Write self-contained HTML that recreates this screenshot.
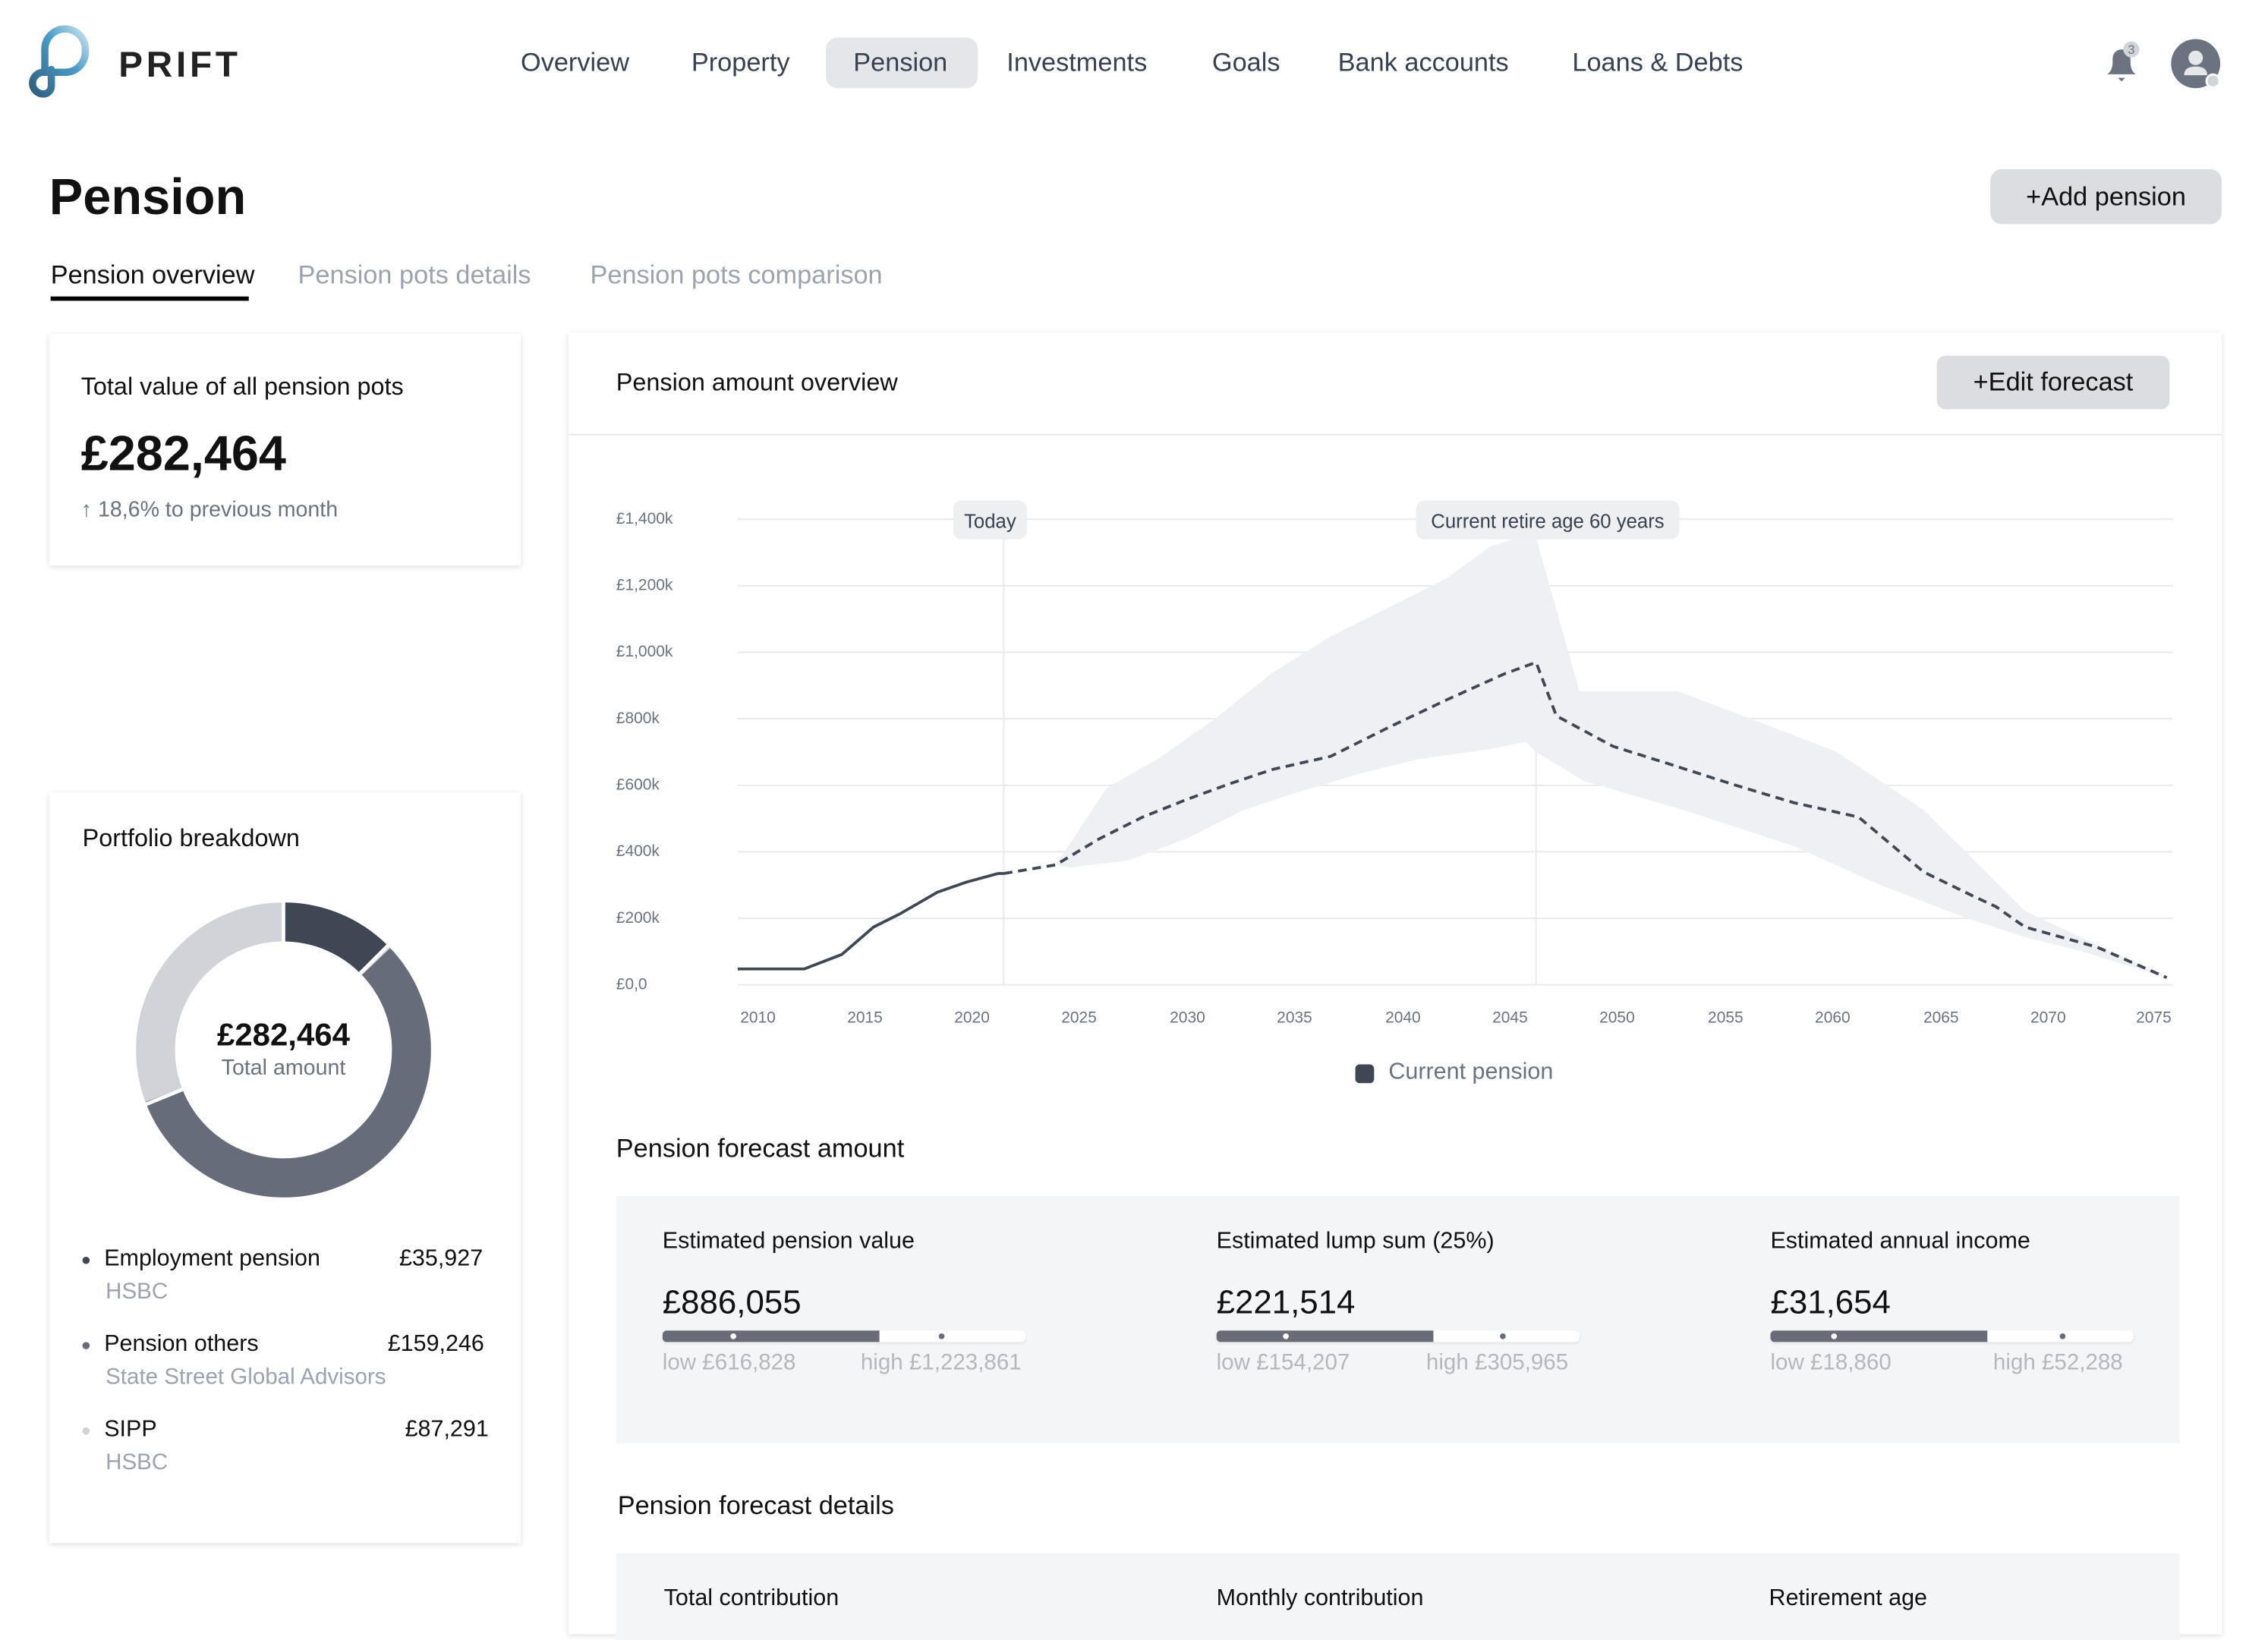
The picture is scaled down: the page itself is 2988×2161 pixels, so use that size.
<!DOCTYPE html>
<html><head><meta charset="utf-8"><style>
*{box-sizing:border-box;margin:0;padding:0}
html,body{width:2988px;height:2124px;overflow:hidden;background:#fff}
#w{position:absolute;left:0;top:0;width:1568px;height:1115px;transform:scale(1.9056);transform-origin:0 0;font-family:"Liberation Sans",sans-serif;color:#111}
.a{position:absolute;white-space:nowrap}
.nav{font-size:18px;color:#374151;top:33px}
.card{position:absolute;background:#fff;box-shadow:0 1px 4px rgba(0,0,0,.14)}
.yl{position:absolute;left:426px;font-size:11px;color:#6b7280}
.xl{position:absolute;top:698px;font-size:11px;color:#6b7280;width:40px;text-align:center}
.h{font-size:16px;color:#111}
.big{font-size:23px;color:#111}
.bar{position:absolute;height:8px;width:251px;background:#fff;border-radius:3px;box-shadow:0 1px 2px rgba(0,0,0,.08);overflow:hidden}
.bar i{position:absolute;left:0;top:0;height:8px;width:150px;background:#676c78}
.bar b{position:absolute;top:2px;width:4px;height:4px;border-radius:2px}
.lh{font-size:15.5px;color:#b4b7bc}
</style></head><body><div id="w">
<svg class="a" style="left:16px;top:14px" width="60" height="60" viewBox="0 0 60 60"><defs><linearGradient id="g" x1="0" y1="1" x2="1" y2="0"><stop offset="0" stop-color="#2f5f80"/><stop offset=".6" stop-color="#4a9cc8"/><stop offset="1" stop-color="#c8e2ef"/></linearGradient></defs><path d="M15 36 V20 A14 14 0 0 1 43 20 V22 A14 14 0 0 1 29 36 H14 A7.5 7.5 0 0 0 14 51 A5.5 5.5 0 0 0 19.5 45.5 V34" fill="none" stroke="url(#g)" stroke-width="5" stroke-linecap="round"/></svg>
<div class="a" style="left:82px;top:31px;font-size:25px;letter-spacing:2.5px;font-weight:bold;color:#222">PRIFT</div>
<div class="a nav" style="left:360px">Overview</div>
<div class="a nav" style="left:478px">Property</div>
<div class="a" style="left:571px;top:26px;width:105px;height:35px;background:#e5e6e9;border-radius:8px"></div>
<div class="a nav" style="left:590px">Pension</div>
<div class="a nav" style="left:696px">Investments</div>
<div class="a nav" style="left:838px">Goals</div>
<div class="a nav" style="left:925px">Bank accounts</div>
<div class="a nav" style="left:1087px">Loans &amp; Debts</div>
<svg class="a" style="left:1452px;top:28px" width="32" height="32" viewBox="0 0 26 26"><path d="M4 19 Q7 17 7 12 V10 A5 5 0 0 1 17 10 V12 Q17 17 20 19 Z" fill="#6b7280"/><path d="M10 21 H14 L12 23Z" fill="#6b7280"/><circle cx="17.5" cy="5" r="4.5" fill="#d1d5db"/><text x="17.5" y="7.5" font-size="7" text-anchor="middle" fill="#6b7280" font-family="Liberation Sans">3</text></svg>
<svg class="a" style="left:1500px;top:26px" width="40" height="40" viewBox="0 0 40 40"><circle cx="18" cy="18" r="17" fill="#6b7280"/><circle cx="18" cy="14" r="5" fill="#e5e7eb"/><path d="M10 26 Q10 20 18 20 Q26 20 26 26Z" fill="#e5e7eb"/><circle cx="30" cy="30" r="4.5" fill="#d1d3d8" stroke="#fff" stroke-width="1.5"/></svg>
<div class="a" style="left:34px;top:117px;font-size:35px;font-weight:bold;color:#111">Pension</div>
<div class="a" style="left:1376px;top:117px;width:160px;height:38px;background:#dcdde0;border-radius:8px;font-size:18px;text-align:center;line-height:38px">+Add pension</div>
<div class="a" style="left:35px;top:180px;font-size:18px">Pension overview</div>
<div class="a" style="left:35px;top:205px;width:137px;height:3px;background:#000"></div>
<div class="a" style="left:206px;top:180px;font-size:18px;color:#9ca3af">Pension pots details</div>
<div class="a" style="left:408px;top:180px;font-size:18px;color:#9ca3af">Pension pots comparison</div>

<div class="card" style="left:34px;top:231px;width:326px;height:160px"></div>
<div class="a h" style="left:56px;top:258px;font-size:17px">Total value of all pension pots</div>
<div class="a" style="left:56px;top:295px;font-size:34px;font-weight:bold">£282,464</div>
<div class="a" style="left:56px;top:344px;font-size:15px;color:#6b7280">↑ 18,6% to previous month</div>

<div class="card" style="left:34px;top:548px;width:326px;height:519px"></div>
<div class="a h" style="left:57px;top:570px;font-size:17px">Portfolio breakdown</div>
<svg class="a" style="left:94px;top:624px" width="204" height="204" viewBox="-102 -102 204 204">
<g fill="none" stroke-width="27" transform="rotate(-90)">
<circle r="88.5" stroke="#d1d3d8"/>
<circle r="88.5" stroke="#676c7a" stroke-dasharray="313.5 243" stroke-dashoffset="-71.5"/>
<circle r="88.5" stroke="#3f4654" stroke-dasharray="70 486"/>
</g>
<g stroke="#fff" stroke-width="2.5"><line x1="0" y1="-75" x2="0" y2="-103"/><line x1="53" y1="-53" x2="73" y2="-73"/><line x1="-69" y1="27" x2="-96" y2="38"/></g>
</svg>
<div class="a" style="left:96px;top:703px;width:200px;text-align:center;font-size:22px;font-weight:bold">£282,464</div>
<div class="a" style="left:96px;top:730px;width:200px;text-align:center;font-size:15px;color:#6b7280">Total amount</div>
<div class="a" style="left:57px;top:869px;width:5px;height:5px;border-radius:3px;background:#3f4654"></div>
<div class="a h" style="left:72px;top:862px">Employment pension</div><div class="a h" style="left:276px;top:862px">£35,927</div>
<div class="a" style="left:73px;top:885px;font-size:15.5px;color:#9ca3af">HSBC</div>
<div class="a" style="left:57px;top:928px;width:5px;height:5px;border-radius:3px;background:#676c7a"></div>
<div class="a h" style="left:72px;top:921px">Pension others</div><div class="a h" style="left:268px;top:921px">£159,246</div>
<div class="a" style="left:73px;top:944px;font-size:15.5px;color:#9ca3af">State Street Global Advisors</div>
<div class="a" style="left:57px;top:987px;width:5px;height:5px;border-radius:3px;background:#d1d3d8"></div>
<div class="a h" style="left:72px;top:980px">SIPP</div><div class="a h" style="left:280px;top:980px">£87,291</div>
<div class="a" style="left:73px;top:1003px;font-size:15.5px;color:#9ca3af">HSBC</div>

<div class="card" style="left:393px;top:230px;width:1143px;height:900px"></div>
<div class="a h" style="left:426px;top:255px;font-size:17px">Pension amount overview</div>
<div class="a" style="left:1339px;top:246px;width:161px;height:37px;background:#dcdde0;border-radius:6px;font-size:18px;text-align:center;line-height:37px">+Edit forecast</div>
<div class="a" style="left:393px;top:300px;width:1143px;height:1px;background:#e5e7eb"></div>
<div class="yl" style="top:353px">£1,400k</div><div class="yl" style="top:399px">£1,200k</div><div class="yl" style="top:445px">£1,000k</div><div class="yl" style="top:491px">£800k</div><div class="yl" style="top:537px">£600k</div><div class="yl" style="top:583px">£400k</div><div class="yl" style="top:629px">£200k</div><div class="yl" style="top:675px">£0,0</div>
<svg class="a" style="left:0;top:0" width="1568" height="760">
<g stroke="#e8e9ec" stroke-width="1"><line x1="510" x2="1502" y1="359" y2="359"/><line x1="510" x2="1502" y1="405" y2="405"/><line x1="510" x2="1502" y1="451" y2="451"/><line x1="510" x2="1502" y1="497" y2="497"/><line x1="510" x2="1502" y1="543" y2="543"/><line x1="510" x2="1502" y1="589" y2="589"/><line x1="510" x2="1502" y1="635" y2="635"/><line x1="510" x2="1502" y1="681" y2="681"/><line x1="694" x2="694" y1="372" y2="681"/><line x1="1062" x2="1062" y1="372" y2="681"/></g>
<path d="M730 598 L765 545 L800 525 L840 497 L880 465 L920 440 L960 420 L1000 400 L1030 378 L1055 370 L1062 372 L1092 478 L1160 478 L1200 493 L1270 520 L1330 560 L1360 590 L1400 630 L1498 676 L1440 658 L1400 648 L1360 635 L1300 612 L1240 585 L1170 562 L1095 540 L1062 520 L1055 513 L1030 518 L980 525 L940 535 L890 550 L860 560 L820 580 L780 595 L755 598 L740 600 Z" fill="#eff0f3"/>
<polyline points="510,670 556,670 582,660 604,641 622,632 648,617 668,610 690,604 694,604" fill="none" stroke="#3f4654" stroke-width="2"/>
<polyline points="694,604 730,598 760,580 790,565 820,553 850,542 880,532 920,523 960,503 1000,484 1040,466 1062,458 1076,495 1115,516 1150,527 1200,543 1240,555 1285,565 1330,603 1365,620 1380,627 1400,641 1450,655 1498,676" fill="none" stroke="#3f4654" stroke-width="2" stroke-dasharray="6 4"/>
<rect x="659" y="346" width="51" height="27" rx="6" fill="#eeeff1"/><text x="684.5" y="365" font-size="13.5" text-anchor="middle" fill="#374151" font-family="Liberation Sans">Today</text>
<rect x="979" y="346" width="182" height="27" rx="6" fill="#eeeff1"/><text x="1070" y="365" font-size="13.5" text-anchor="middle" fill="#374151" font-family="Liberation Sans">Current retire age 60 years</text>
</svg>
<div class="xl" style="left:504px">2010</div><div class="xl" style="left:578px">2015</div><div class="xl" style="left:652px">2020</div><div class="xl" style="left:726px">2025</div><div class="xl" style="left:801px">2030</div><div class="xl" style="left:875px">2035</div><div class="xl" style="left:950px">2040</div><div class="xl" style="left:1024px">2045</div><div class="xl" style="left:1098px">2050</div><div class="xl" style="left:1173px">2055</div><div class="xl" style="left:1247px">2060</div><div class="xl" style="left:1322px">2065</div><div class="xl" style="left:1396px">2070</div><div class="xl" style="left:1469px">2075</div>
<div class="a" style="left:937px;top:736px;width:13px;height:13px;border-radius:3px;background:#3f4654"></div>
<div class="a" style="left:960px;top:733px;font-size:16px;color:#6b7280">Current pension</div>
<div class="a" style="left:426px;top:784px;font-size:18px">Pension forecast amount</div>
<div class="a" style="left:426px;top:827px;width:1081px;height:171px;background:#f4f5f7"></div>
<div class="a h" style="left:458px;top:850px">Estimated pension value</div>
<div class="a big" style="left:458px;top:887px">£886,055</div>
<div class="bar" style="left:458px;top:920px"><i></i><b style="left:47px;background:#fff"></b><b style="left:191px;background:#676c78"></b></div>
<div class="a lh" style="left:458px;top:934px">low £616,828</div><div class="a lh" style="left:595px;top:934px">high £1,223,861</div>
<div class="a h" style="left:841px;top:850px">Estimated lump sum (25%)</div>
<div class="a big" style="left:841px;top:887px">£221,514</div>
<div class="bar" style="left:841px;top:920px"><i></i><b style="left:46px;background:#fff"></b><b style="left:196px;background:#676c78"></b></div>
<div class="a lh" style="left:841px;top:934px">low £154,207</div><div class="a lh" style="left:986px;top:934px">high £305,965</div>
<div class="a h" style="left:1224px;top:850px">Estimated annual income</div>
<div class="a big" style="left:1224px;top:887px">£31,654</div>
<div class="bar" style="left:1224px;top:920px"><i></i><b style="left:42px;background:#fff"></b><b style="left:200px;background:#676c78"></b></div>
<div class="a lh" style="left:1224px;top:934px">low £18,860</div><div class="a lh" style="left:1378px;top:934px">high £52,288</div>
<div class="a" style="left:427px;top:1031px;font-size:18px">Pension forecast details</div>
<div class="a" style="left:426px;top:1074px;width:1081px;height:60px;background:#f4f5f7"></div>
<div class="a h" style="left:459px;top:1097px">Total contribution</div>
<div class="a h" style="left:841px;top:1097px">Monthly contribution</div>
<div class="a h" style="left:1223px;top:1097px">Retirement age</div>
</div></body></html>
